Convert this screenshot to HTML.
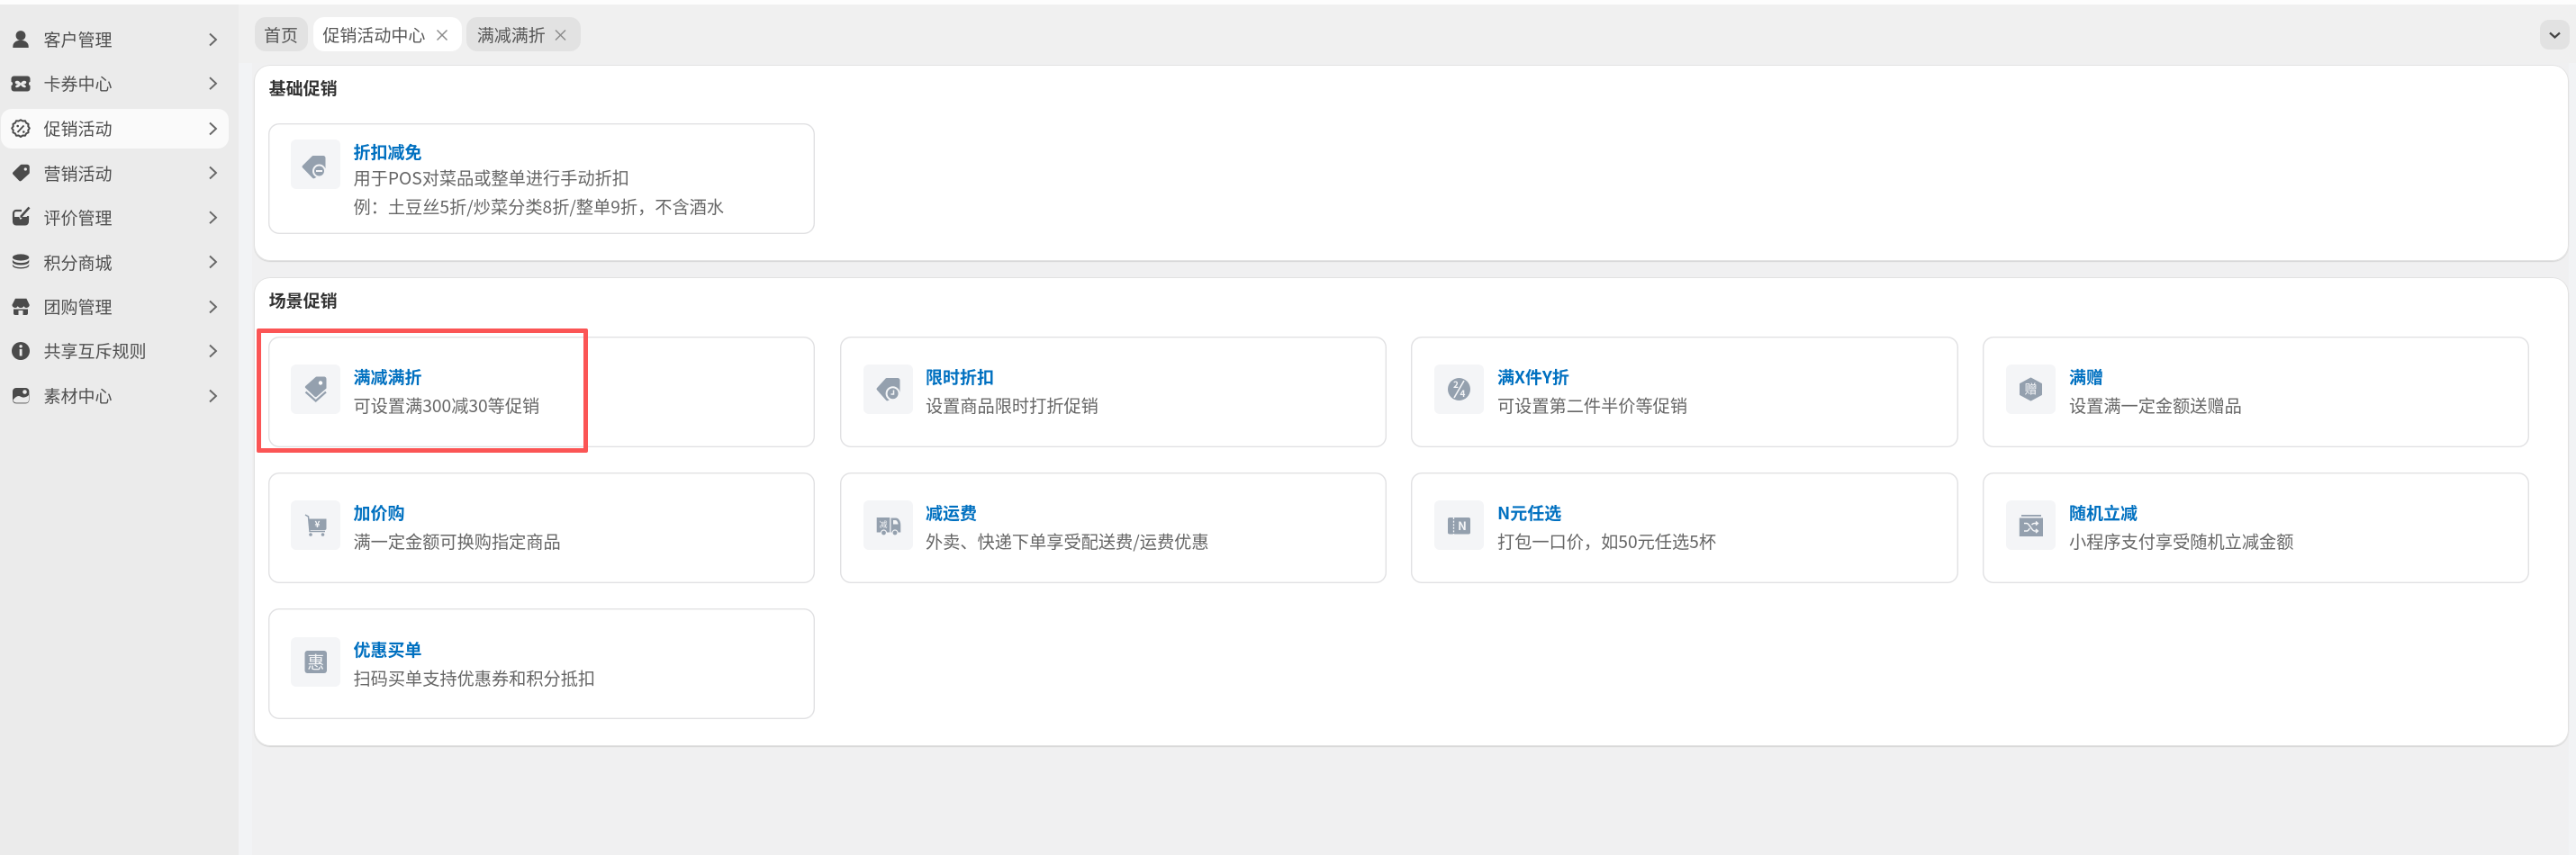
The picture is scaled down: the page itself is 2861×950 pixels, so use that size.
<!DOCTYPE html>
<html lang="zh-CN">
<head>
<meta charset="utf-8">
<title>促销活动中心</title>
<style>
html,body{margin:0;padding:0;width:2861px;height:950px;overflow:hidden;background:#f2f3f5;}
body{position:relative;font-family:"Noto Sans CJK SC","Liberation Sans",sans-serif;font-size:19px;}
div,span,svg{position:absolute;}
.t{white-space:nowrap;line-height:28px;height:28px;}
#top{left:0;top:0;width:2861px;height:5px;background:#fdfdfd;}
#side{left:0;top:5px;width:265px;height:945px;background:#ebebeb;}
#tabbar{left:265px;top:5px;width:2596px;height:65px;background:#f0f0f0;}
#main{left:280px;top:70px;width:2573px;height:880px;background:#f0f0f1;}
#act{left:1px;top:121px;width:253px;height:44px;border-radius:12px;background:#fafafa;}
.m{left:48.5px;color:#4f4f4f;}
.tab{top:19px;height:38px;border-radius:12px;background:#e2e2e2;}
.tt{color:#555;top:25px;}
.panel{left:281.8px;width:2571.5px;background:#fff;border-radius:18px;box-shadow:inset 0 0 0 1px #e2e2e2,0 1px 1px #d4d4d4;}
.h{left:298.6px;color:#333;font-weight:700;}
.c{width:607.5px;height:123px;border-radius:12px;background:#fff;box-shadow:inset 0 0 0 1.4px #e1e1e3;}
.b{width:55px;height:55px;border-radius:6px;background:#f4f5f7;}
.n{color:#0070c0;font-weight:700;}
.d{color:#666;font-size:19.2px;}
.lab{font-family:"Noto Sans CJK SC","Liberation Sans",sans-serif;}
</style>
</head>
<body>
<div id="top"></div>
<div id="side"></div>
<div id="tabbar"></div>
<div id="main"></div>
<div id="act"></div>

<!-- sidebar text -->
<div class="t m" style="top:29.5px">客户管理</div>
<div class="t m" style="top:79px">卡券中心</div>
<div class="t m" style="top:129px">促销活动</div>
<div class="t m" style="top:178.7px">营销活动</div>
<div class="t m" style="top:227.7px">评价管理</div>
<div class="t m" style="top:277.7px">积分商城</div>
<div class="t m" style="top:326.7px">团购管理</div>
<div class="t m" style="top:376px">共享互斥规则</div>
<div class="t m" style="top:426px">素材中心</div>

<!-- sidebar icons and chevrons -->
<svg style="left:0;top:0" width="265" height="470" viewBox="0 0 265 470">
  <g fill="#4b4b4b">
    <circle cx="23" cy="39.5" r="5.4"/>
    <path d="M14.3 53v-1.5c0-4.5 4.5-6.7 8.7-6.7s8.7 2.2 8.7 6.7V53z"/>
    <path d="M15.5 84.5h15a3 3 0 0 1 3 3v3.4a2.2 2.2 0 0 0 0 4.2v3.4a3 3 0 0 1-3 3h-15a3 3 0 0 1-3-3v-3.4a2.2 2.2 0 0 0 0-4.2v-3.4a3 3 0 0 1 3-3z"/>
    <path d="M24 182.7h6.2a2.6 2.6 0 0 1 2.6 2.6v6.4a2 2 0 0 1-.7 1.5l-8.2 7.6a2 2 0 0 1-2.7-.1l-6.6-6.8a2 2 0 0 1 .1-2.8l8-7.8a2 2 0 0 1 1.3-.6z"/>
    <path d="M14 241h18v5.5a4 4 0 0 1-4 4H18a4 4 0 0 1-4-4z"/>
    <ellipse cx="23.1" cy="286" rx="9.2" ry="3.6"/>
    <path d="M13.9 288.5c1 2.4 4.8 3.6 9.2 3.6s8.2-1.2 9.2-3.6v2.4c0 2.2-4 3.6-9.2 3.6s-9.2-1.4-9.2-3.6z"/>
    <path d="M13.9 293.5c1 2.4 4.8 3.6 9.2 3.6s8.2-1.2 9.2-3.6v1.4c0 2.2-4 3.6-9.2 3.6s-9.2-1.4-9.2-3.6z"/>
    <path d="M17 331.7h12.4l3.4 7.2a3.4 3.4 0 0 1-3.2 3.1 3.3 3.3 0 0 1-3.2-2 3.3 3.3 0 0 1-3.3 2 3.3 3.3 0 0 1-3.3-2 3.3 3.3 0 0 1-3.2 2 3.4 3.4 0 0 1-3.2-3.1z"/>
    <path d="M15 343.5h16V348a2 2 0 0 1-2 2h-3.5v-5h-5v5H17a2 2 0 0 1-2-2z"/>
    <circle cx="23" cy="390" r="10"/>
    <rect x="14" y="431" width="18.4" height="17.4" rx="4"/>
  </g>
  <g fill="#ebebeb">
    <path d="M17 90.5c2-1.5 4.5-.7 6 2 1.5-2.7 4-3.5 6-2 1 2-1 3.2-3.5 3.2 2.5.6 4 1.8 3 3.3-2 .8-4.3-.3-5.500-2.700-1.200 2.400-3.500 3.500-5.500 2.700-1-1.500.5-2.700 3-3.300-2.500 0-4.500-1.200-3.500-3.200z"/>
    <circle cx="28.3" cy="188" r="1.6"/>
    <rect x="21.700" y="388" width="2.800" height="7.500"/>
    <circle cx="23.100" cy="384.800" r="1.700"/>
    <circle cx="27.500" cy="435.500" r="2.300"/>
    <path d="M14.500 444.500c3-3.800 5.700-5.300 8-4 2.500 1.400 5.500 1.900 9.500-1.500v5.500a3 3 0 0 1-3 3h-11a3.500 3.500 0 0 1-3.500-3z"/>
  </g>
  <!-- discount badge -->
  <path d="M20.700 134.500l2.300-1.200 2.300 1.200 2.700-.2 1.100 2.300 2.400 1.200-.2 2.600 1.500 2.100-1.500 2.100.2 2.600-2.400 1.200-1.100 2.300-2.700-.2-2.300 1.500-2.300-1.500-2.700.2-1.100-2.300-2.400-1.200.2-2.600-1.500-2.100 1.500-2.100-.2-2.600 2.400-1.200 1.100-2.300z" fill="none" stroke="#4b4b4b" stroke-width="2" stroke-linejoin="round"/>
  <path d="M26.500 139.500l-7 7.500" stroke="#4b4b4b" stroke-width="1.800" fill="none"/>
  <circle cx="19.700" cy="140" r="1.300" fill="#4b4b4b"/>
  <circle cx="26.300" cy="146.500" r="1.300" fill="#4b4b4b"/>
  <!-- pencil box -->
  <path d="M24 234h-6a3 3 0 0 0-3 3v7M31 240v5" fill="none" stroke="#4b4b4b" stroke-width="2.200"/>
  <path d="M23 241l9.500-10.500" fill="none" stroke="#4b4b4b" stroke-width="2.600"/>
  <path d="M21 241l1.700 3 2-1.800" fill="#ebebeb"/>
  <!-- chevrons -->
  <g fill="none" stroke="#666" stroke-width="1.900">
    <path d="M233 37.500l7 6.500-7 6.500"/>
    <path d="M233 86.200l7 6.500-7 6.500"/>
    <path d="M233 136.500l7 6.500-7 6.500"/>
    <path d="M233 185.500l7 6.500-7 6.500"/>
    <path d="M233 235.200l7 6.500-7 6.500"/>
    <path d="M233 284.500l7 6.500-7 6.500"/>
    <path d="M233 334.500l7 6.500-7 6.500"/>
    <path d="M233 383.500l7 6.500-7 6.500"/>
    <path d="M233 433.500l7 6.500-7 6.500"/>
  </g>
</svg>

<!-- tabs -->
<div class="tab" style="left:282.6px;width:59px"></div>
<div class="t tt" style="left:293px">首页</div>
<div class="tab" style="left:348.3px;width:164.500px;background:#fff"></div>
<div class="t tt" style="left:358.400px">促销活动中心</div>
<div class="tab" style="left:518.3px;width:126.300px"></div>
<div class="t tt" style="left:529.700px">满减满折</div>
<svg style="left:480px;top:30px" width="160" height="18" viewBox="0 0 160 18" fill="none" stroke="#8a8a8a" stroke-width="1.500">
  <path d="M5.500 3.500l11 11M16.500 3.500l-11 11"/>
  <path d="M137 3.500l11 11M148 3.500l-11 11"/>
</svg>
<div style="left:2821px;top:22px;width:33px;height:33px;border-radius:10px;background:#e2e2e2"></div>
<svg style="left:2821px;top:22px" width="33" height="33" viewBox="0 0 33 33" fill="none" stroke="#444" stroke-width="2.200"><path d="M11 14.500l5.500 5 5.500-5"/></svg>

<!-- panels -->
<div class="panel" style="top:71.700px;height:218.300px"></div>
<div class="panel" style="top:308.300px;height:520.700px"></div>
<div class="t h" style="top:84px">基础促销</div>
<div class="t h" style="top:320px">场景促销</div>

<!-- card: 折扣减免 -->
<div class="c" style="left:297.600px;top:137.300px"></div>
<div class="b" style="left:323.400px;top:155px"></div>
<svg style="left:323.400px;top:155px" width="55" height="55" viewBox="0 0 55 55">
  <path d="M25 18h11a2.500 2.500 0 0 1 2.500 2.500v15L26.500 43a2 2 0 0 1-2.400-.3L13.200 31.500a1.800 1.800 0 0 1 0-2.600L23.500 18.600a2 2 0 0 1 1.500-.6z" fill="#94a0ae"/>
  <circle cx="31.500" cy="35" r="7.500" fill="#f4f5f7"/>
  <circle cx="31.500" cy="35" r="5.500" fill="#94a0ae"/>
  <rect x="28" y="34" width="7" height="2" fill="#f4f5f7"/>
</svg>
<div class="t n" style="left:392.500px;top:155px">折扣减免</div>
<div class="t d" style="left:392.500px;top:182.500px">用于POS对菜品或整单进行手动折扣</div>
<div class="t d" style="left:392.500px;top:214.500px">例：土豆丝5折/炒菜分类8折/整单9折，不含酒水</div>

<!-- row 1 -->
<div class="c" style="left:297.600px;top:374px"></div>
<div class="b" style="left:323.400px;top:405px"></div>
<svg style="left:323.400px;top:405px" width="55" height="55" viewBox="0 0 55 55">
  <path d="M29 13.500h8a2.500 2.500 0 0 1 2.500 2.500v10.500L29 35.500a2 2 0 0 1-2.700 0L16.500 26.300a1.800 1.800 0 0 1 0-2.600L27.500 14a2.200 2.200 0 0 1 1.500-.5z" fill="#94a0ae"/>
  <circle cx="33" cy="20.500" r="2.200" fill="#fff"/>
  <path d="M16.500 30.500L27.700 40.500 39 30.500" fill="none" stroke="#94a0ae" stroke-width="2.200"/>
</svg>
<div class="t n" style="left:392.500px;top:405px">满减满折</div>
<div class="t d" style="left:392.500px;top:436.200px">可设置满300减30等促销</div>

<div class="c" style="left:932.500px;top:374px"></div>
<div class="b" style="left:959.200px;top:405px"></div>
<svg style="left:959.200px;top:405px" width="55" height="55" viewBox="0 0 55 55">
  <path d="M26 15h12a2.500 2.500 0 0 1 2.500 2.500v15L27.500 40a2 2 0 0 1-2.400-.3L15.200 28.500a1.800 1.800 0 0 1 0-2.600L24.500 15.600a2 2 0 0 1 1.500-.6z" fill="#94a0ae"/>
  <circle cx="32.600" cy="32.300" r="8" fill="#f4f5f7"/>
  <circle cx="32.600" cy="32.300" r="6" fill="#94a0ae"/>
  <path d="M33.500 28.500v4.500h-3" fill="none" stroke="#f4f5f7" stroke-width="1.500"/>
</svg>
<div class="t n" style="left:1028px;top:405px">限时折扣</div>
<div class="t d" style="left:1028px;top:436.200px">设置商品限时打折促销</div>

<div class="c" style="left:1567.400px;top:374px"></div>
<div class="b" style="left:1592.900px;top:405px"></div>
<svg style="left:1592.900px;top:405px" width="55" height="55" viewBox="0 0 55 55">
  <circle cx="27.500" cy="27.500" r="12.500" fill="#94a0ae"/>
  <path d="M33 18L22 37" stroke="#f4f5f7" stroke-width="1.600" fill="none"/>
  <text x="24" y="26" font-size="10" font-weight="700" fill="#f4f5f7" text-anchor="middle" class="lab">2</text>
  <text x="31.500" y="36" font-size="10" font-weight="700" fill="#f4f5f7" text-anchor="middle" class="lab">4</text>
</svg>
<div class="t n" style="left:1663px;top:405px">满X件Y折</div>
<div class="t d" style="left:1663px;top:436.200px">可设置第二件半价等促销</div>

<div class="c" style="left:2201.600px;top:374px"></div>
<div class="b" style="left:2228.200px;top:405px"></div>
<svg style="left:2228.200px;top:405px" width="55" height="55" viewBox="0 0 55 55">
  <path d="M27.500 15l12 6.500v12L27.500 40l-12-6.500v-12z" fill="#94a0ae" stroke="#94a0ae" stroke-width="1" stroke-linejoin="round"/>
  <text x="27.500" y="32.500" font-size="14" fill="#f4f5f7" text-anchor="middle" class="lab">赠</text>
</svg>
<div class="t n" style="left:2298px;top:405px">满赠</div>
<div class="t d" style="left:2298px;top:436.200px">设置满一定金额送赠品</div>

<!-- row 2 -->
<div class="c" style="left:297.600px;top:525.300px"></div>
<div class="b" style="left:323.400px;top:556px"></div>
<svg style="left:323.400px;top:556px" width="55" height="55" viewBox="0 0 55 55">
  <path d="M16 16l3.500 2 1.500 16.500h17" fill="none" stroke="#94a0ae" stroke-width="1.500"/>
  <path d="M20 20.500h19.500v10.500a2 2 0 0 1-2 2H21z" fill="#94a0ae"/>
  <text x="29.500" y="30" font-size="10" font-weight="700" fill="#f4f5f7" text-anchor="middle" class="lab">¥</text>
  <circle cx="22" cy="38" r="1.800" fill="#94a0ae"/>
  <circle cx="35.500" cy="38" r="1.800" fill="#94a0ae"/>
</svg>
<div class="t n" style="left:392.500px;top:556px">加价购</div>
<div class="t d" style="left:392.500px;top:587.200px">满一定金额可换购指定商品</div>

<div class="c" style="left:932.500px;top:525.300px"></div>
<div class="b" style="left:959.200px;top:556px"></div>
<svg style="left:959.200px;top:556px" width="55" height="55" viewBox="0 0 55 55">
  <rect x="14.700" y="19" width="14.500" height="16.500" fill="#94a0ae"/>
  <path d="M30.500 19.500h5.500c3 0 5.300 3.500 5.300 8v8h-10.800z" fill="#94a0ae"/>
  <path d="M33 22h2.500c1.500 0 2.800 2 3 4.500H33z" fill="#f4f5f7"/>
  <text x="22" y="30" font-size="9" fill="#f4f5f7" text-anchor="middle" class="lab">减</text>
  <circle cx="22.500" cy="36" r="3" fill="#94a0ae" stroke="#f4f5f7" stroke-width="1.200"/>
  <circle cx="35" cy="36" r="3" fill="#94a0ae" stroke="#f4f5f7" stroke-width="1.200"/>
</svg>
<div class="t n" style="left:1028px;top:556px">减运费</div>
<div class="t d" style="left:1028px;top:587.200px">外卖、快递下单享受配送费/运费优惠</div>

<div class="c" style="left:1567.400px;top:525.300px"></div>
<div class="b" style="left:1592.900px;top:556px"></div>
<svg style="left:1592.900px;top:556px" width="55" height="55" viewBox="0 0 55 55">
  <rect x="15" y="19" width="25" height="18.500" rx="2" fill="#94a0ae"/>
  <path d="M21.500 19v18.500" stroke="#f4f5f7" stroke-width="1.300" stroke-dasharray="2 1.600"/>
  <text x="31" y="33" font-size="13" font-weight="700" fill="#f4f5f7" text-anchor="middle" class="lab">N</text>
</svg>
<div class="t n" style="left:1663px;top:556px">N元任选</div>
<div class="t d" style="left:1663px;top:587.200px">打包一口价，如50元任选5杯</div>

<div class="c" style="left:2201.600px;top:525.300px"></div>
<div class="b" style="left:2228.200px;top:556px"></div>
<svg style="left:2228.200px;top:556px" width="55" height="55" viewBox="0 0 55 55">
  <rect x="17" y="16" width="22" height="1.800" fill="#94a0ae"/>
  <rect x="14.800" y="19.500" width="26.200" height="20.500" fill="#94a0ae"/>
  <g fill="none" stroke="#f4f5f7" stroke-width="1.500">
    <path d="M20 25.500h3c3 0 5.500 8.500 8.500 8.500h3"/>
    <path d="M20 34h3c1.200 0 2.300-1.300 3.200-3M28.500 27c.8-.9 1.700-1.500 3-1.500h3"/>
    <path d="M33 23.500l2.300 2-2.300 2M33 32l2.300 2-2.300 2"/>
  </g>
</svg>
<div class="t n" style="left:2298px;top:556px">随机立减</div>
<div class="t d" style="left:2298px;top:587.200px">小程序支付享受随机立减金额</div>

<!-- row 3 -->
<div class="c" style="left:297.600px;top:676px"></div>
<div class="b" style="left:323.400px;top:708px"></div>
<svg style="left:323.400px;top:708px" width="55" height="55" viewBox="0 0 55 55">
  <rect x="15.500" y="15" width="24.500" height="25" rx="3" fill="#94a0ae"/>
  <text x="27.700" y="34.500" font-size="19" fill="#f4f5f7" text-anchor="middle" class="lab">惠</text>
</svg>
<div class="t n" style="left:392.500px;top:707.700px">优惠买单</div>
<div class="t d" style="left:392.500px;top:738.500px">扫码买单支持优惠券和积分抵扣</div>

<!-- red highlight -->
<div style="left:284.600px;top:365.300px;width:368.500px;height:137.500px;box-sizing:border-box;border:5px solid #fb5555;border-radius:2px"></div>
</body>
</html>
